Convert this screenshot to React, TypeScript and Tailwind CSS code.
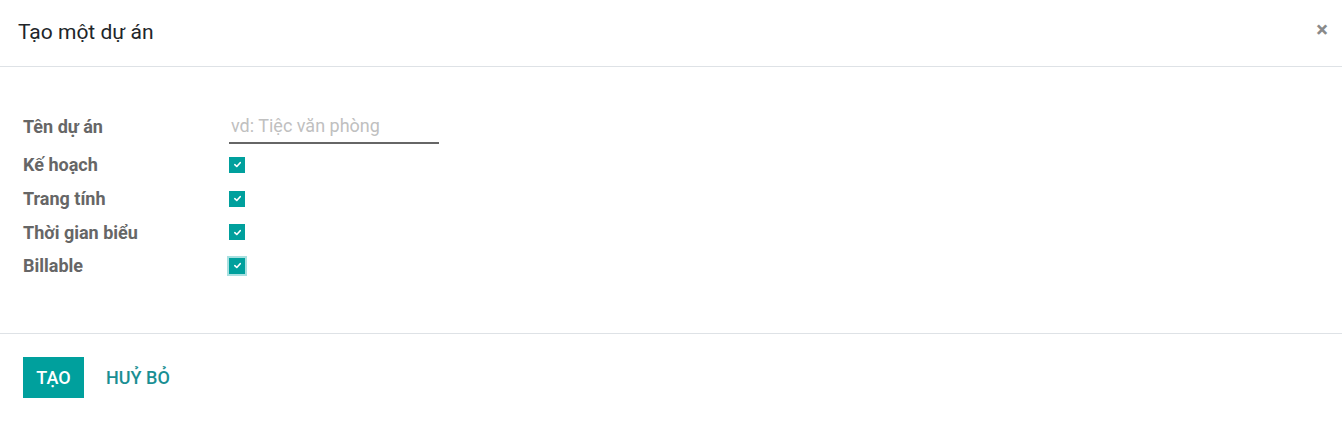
const fields = ['Kế hoạch', 'Trang tính', 'Thời gian biểu', 'Billable'];

function Check({ focused }: { focused?: boolean }) {
  return (
    <span
      className={`flex h-4 w-4 items-center justify-center bg-[#00a09d] ${
        focused ? 'ring-2 ring-[#a8e0e0]' : ''
      }`}
    >
      <svg viewBox="0 0 10 10" className="h-[9px] w-[9px]" fill="none">
        <path d="M2 5.2 L4.2 7.2 L8 3" stroke="white" strokeWidth="1.8" strokeLinecap="round" strokeLinejoin="round" />
      </svg>
    </span>
  );
}

export default function App() {
  return (
    <div className="flex h-[425px] w-full flex-col bg-white font-['Roboto',sans-serif]">
      {/* header */}
      <div className="flex h-[67px] items-center justify-between border-b border-[#dee2e6] pl-[18px] pr-[14px]">
        <h4 className="pb-[1px] text-[21px] text-[#212529]">Tạo một dự án</h4>
        <span className="pb-[6px] text-[22px] font-bold leading-none text-[#8a8a8a]">×</span>
      </div>

      {/* body */}
      <div className="flex h-[267px] flex-col border-b border-[#dee2e6] pl-[23px] pt-[45px]">
        <div className="flex h-[36px] items-start">
          <label className="w-[206px] pt-[1px] text-[18px] font-bold text-[#666]">Tên dự án</label>
          <div className="w-[210px] border-b-2 border-[#666] pb-[3px] pl-[2px] text-[18px] text-[#c0c0c0]">
            vd: Tiệc văn phòng
          </div>
        </div>
        {fields.map((f, i) => (
          <div key={f} className="flex h-[33.7px] items-center">
            <label className="w-[206px] text-[18px] font-bold text-[#666]">{f}</label>
            <Check focused={i === fields.length - 1} />
          </div>
        ))}
      </div>

      {/* footer */}
      <div className="flex items-center gap-[22px] pl-[23px] pt-[23px]">
        <button className="h-[41px] w-[61px] bg-[#00a09d] text-[18px] font-medium text-white">TẠO</button>
        <button className="text-[18px] font-medium text-[#1a8f93]">HUỶ BỎ</button>
      </div>
    </div>
  );
}
